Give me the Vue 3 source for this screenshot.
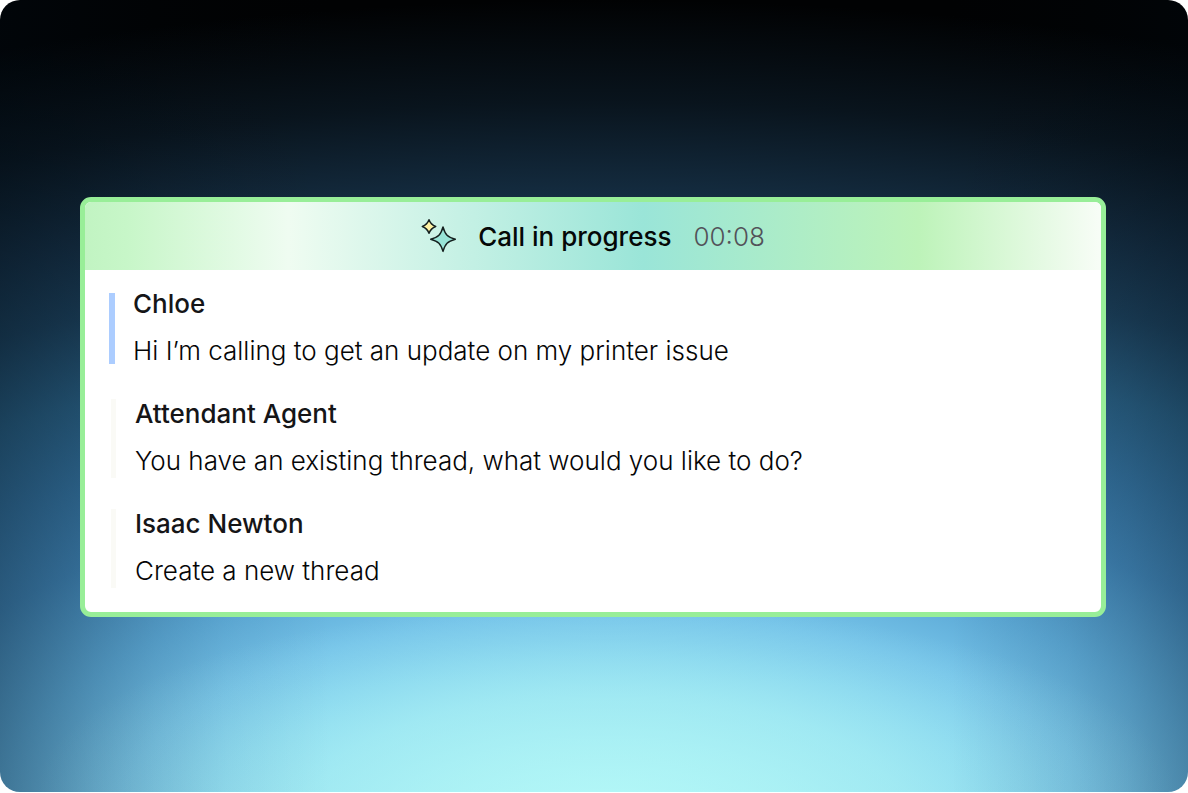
<script setup>
const entries = [
  { speaker: 'Chloe', text: 'Hi I’m calling to get an update on my printer issue', active: true },
  { speaker: 'Attendant Agent', text: 'You have an existing thread, what would you like to do?', active: false },
  { speaker: 'Isaac Newton', text: 'Create a new thread', active: false },
]
</script>

<template>
  <main class="stage">
    <section class="card" aria-labelledby="call-status">
      <header class="status">
        <svg class="sparkles" width="36" height="36" viewBox="0 0 36 36" aria-hidden="true">
          <path class="spark small" d="M8 1.8Q9.8 6.7 14.7 8.5Q9.8 10.3 8 15.2Q6.2 10.3 1.3 8.5Q6.2 6.7 8 1.8Z" />
          <path class="spark large" d="M22 9C24.2 16.7 26.5 19 34.3 21.2C26.5 23.4 24.2 25.7 22 33.4C19.8 25.7 17.5 23.4 9.7 21.2C17.5 19 19.8 16.7 22 9Z" />
        </svg>
        <h1 id="call-status" class="title">Call in progress</h1>
        <time class="timer">00:08</time>
      </header>
      <div class="transcript">
        <article v-for="entry in entries" :key="entry.speaker" class="entry" :class="{ active: entry.active }">
          <h2 class="speaker">{{ entry.speaker }}</h2>
          <p class="message">{{ entry.text }}</p>
        </article>
      </div>
    </section>
  </main>
</template>

<style>
body {
  margin: 0;
  background: #fff;
}
</style>

<style scoped>
.stage {
  box-sizing: border-box;
  min-height: calc(100vh - 1px);
  padding: 22px 82px 0 80px;
  display: flex;
  flex-direction: column;
  justify-content: center;
  border-radius: 20px;
  font-family: Inter, "Liberation Sans", sans-serif;
  font-size: 26px;
  line-height: 30px;
  background:
    linear-gradient(
      90deg,
      rgba(0, 12, 22, 0.34) 0%,
      rgba(0, 12, 22, 0.26) 4%,
      rgba(0, 12, 22, 0.18) 8%,
      rgba(0, 12, 22, 0.1) 13%,
      rgba(0, 12, 22, 0.04) 19%,
      rgba(0, 12, 22, 0) 28%,
      rgba(0, 12, 22, 0) 80%,
      rgba(0, 12, 22, 0.08) 90%,
      rgba(0, 12, 22, 0.15) 95%,
      rgba(0, 12, 22, 0.25) 100%
    ),
    radial-gradient(
      ellipse 570px 190px at 51% 100%,
      rgba(176, 246, 246, 0.6) 0%,
      rgba(168, 240, 244, 0.5) 50%,
      rgba(160, 232, 242, 0.2) 80%,
      rgba(160, 232, 242, 0) 100%
    ),
    radial-gradient(
      ellipse 1800px 850px at 51% 850px,
      #b4f8f9 0%,
      #b2f6f8 7%,
      #a8eef4 12%,
      #98e2f1 18%,
      #86d4ee 23%,
      #76c4e9 28%,
      #5ca9d6 35%,
      #4084b5 44%,
      #33709c 52%,
      #285d80 60%,
      #1b3e58 69%,
      #142c40 77%,
      #09141d 88%,
      #010203 100%
    );
}

.card {
  overflow: hidden;
  border: 5px solid #98ee98;
  border-radius: 11px;
  background: #fff;
}

.status {
  display: flex;
  align-items: center;
  justify-content: center;
  height: 68px;
  background: linear-gradient(
    90deg,
    #c1f4c2 0%,
    #c7f6c8 4%,
    #effcf1 20%,
    #9ae5d8 55%,
    #bdf3b9 82%,
    #f8fdf7 100%
  );
}

.sparkles {
  margin-right: 21px;
}

.spark {
  stroke: #15201f;
  stroke-width: 1.5;
  stroke-linejoin: round;
}

.small {
  fill: #fff3a5;
}

.large {
  fill: #98e4d7;
}

.title,
.speaker {
  margin: 0;
  font-size: 26px;
  font-weight: 500;
}

.title {
  color: #050807;
}

.title,
.timer {
  line-height: 32px;
  padding-top: 2px;
}

.timer {
  margin-left: 22px;
  color: #525259;
  font-weight: 300;
}

.transcript {
  display: grid;
  gap: 31px;
  padding: 19px 26px 24px;
}

.entry {
  display: grid;
  grid-template-columns: 5px 1fr;
  column-gap: 19px;
  row-gap: 17px;
  padding-bottom: 2px;
  color: #151517;
}

.entry::before {
  content: "";
  grid-row: 1 / 3;
  margin-bottom: -2px;
  background: #fafaf6;
}

.entry.active {
  grid-template-columns: 6px 1fr;
  column-gap: 18px;
  margin-left: -2px;
}

.entry.active::before {
  margin: 4px 0 2px;
  background: #accdff;
}

.message {
  margin: 0;
  grid-column: 2;
  color: #050506;
  font-weight: 300;
}
</style>
